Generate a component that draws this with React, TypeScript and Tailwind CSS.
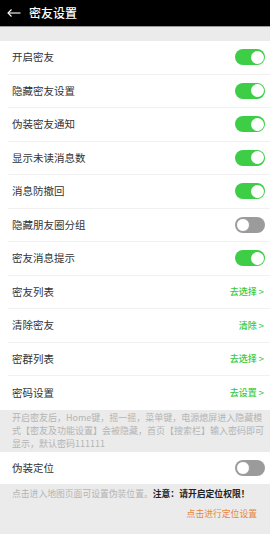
import { useState } from 'react';

const font = { fontFamily: '"Noto Sans CJK SC", "Noto Sans", sans-serif' };

function Toggle({ on }: { on: boolean }) {
  return (
    <div
      className={
        on
          ? 'relative w-[30px] h-[16px] rounded-full bg-[#3dcd47]'
          : 'relative w-[30px] h-[16px] rounded-full bg-[#9b9b9b]'
      }
    >
      <div
        className={
          on
            ? 'absolute top-[1.5px] right-[1.5px] w-[13px] h-[13px] rounded-full bg-white'
            : 'absolute top-[1px] left-[1px] w-[14px] h-[14px] rounded-full bg-white border border-[#9b9b9b]'
        }
      />
    </div>
  );
}

function Row({ label, children, last }: { label: string; children: React.ReactNode; last?: boolean }) {
  return (
    <div className="pl-[8px] bg-white">
      <div
        className={
          last
            ? 'h-[33.5px] flex items-center justify-between pl-[4px] pr-[5px]'
            : 'h-[33.5px] flex items-center justify-between pl-[4px] pr-[5px] border-b border-[#f1f1f1]'
        }
      >
        <span className="text-[10.5px] text-[#333]">{label}</span>
        {children}
      </div>
    </div>
  );
}

function Link({ text }: { text: string }) {
  return <span className="text-[9px] font-medium text-[#35c83b] pr-[1px]">{text} &gt;</span>;
}

export default function App() {
  const [toggles] = useState([
    { label: '开启密友', on: true },
    { label: '隐藏密友设置', on: true },
    { label: '伪装密友通知', on: true },
    { label: '显示未读消息数', on: true },
    { label: '消息防撤回', on: true },
    { label: '隐藏朋友圈分组', on: false },
    { label: '密友消息提示', on: true },
  ]);

  return (
    <div className="w-[270px] h-[534px] bg-[#ebebeb] overflow-hidden" style={font}>
      {/* 상단 바 */}
      <div className="h-[27px] bg-black flex items-center pl-[7px] gap-[8px] border-b border-[#9a9a9a]">
        <svg width="14" height="10" viewBox="0 0 14 10" fill="none" stroke="white" strokeWidth="1.1">
          <path d="M13.5 5H1" />
          <path d="M4.5 1.5L1 5l3.5 3.5" />
        </svg>
        <span className="text-[12px] font-medium text-white">密友设置</span>
      </div>

      <div className="h-[14px]" />

      {toggles.map((t) => (
        <Row key={t.label} label={t.label}>
          <Toggle on={t.on} />
        </Row>
      ))}
      <Row label="密友列表">
        <Link text="去选择" />
      </Row>
      <Row label="清除密友">
        <Link text="清除" />
      </Row>
      <Row label="密群列表">
        <Link text="去选择" />
      </Row>
      <Row label="密码设置" last>
        <Link text="去设置" />
      </Row>

      <div className="px-[12px] pt-[1.5px] pb-[1.5px] text-[9px] leading-[13px] text-[#b4b4b4] whitespace-nowrap">
        <div>开启密友后，Home键，摇一摇，菜单键，电源熄屏进入隐藏模</div>
        <div>式【密友及功能设置】会被隐藏，首页【搜索栏】输入密码即可</div>
        <div>显示，默认密码111111</div>
      </div>

      <div className="bg-white h-[32px] flex items-center justify-between pl-[12px] pr-[5px]">
        <span className="text-[10.5px] text-[#333]">伪装定位</span>
        <Toggle on={false} />
      </div>

      <div className="px-[12px] pt-[3px] text-[8.8px] leading-[13px] whitespace-nowrap">
        <div className="text-[#b4b4b4]">
          点击进入地图页面可设置伪装位置。
          <span className="text-[#222] font-bold">注意：请开启定位权限！</span>
        </div>
        <div className="text-right text-[#e8853a] mt-[7px] pr-[1px]">点击进行定位设置</div>
      </div>
    </div>
  );
}
